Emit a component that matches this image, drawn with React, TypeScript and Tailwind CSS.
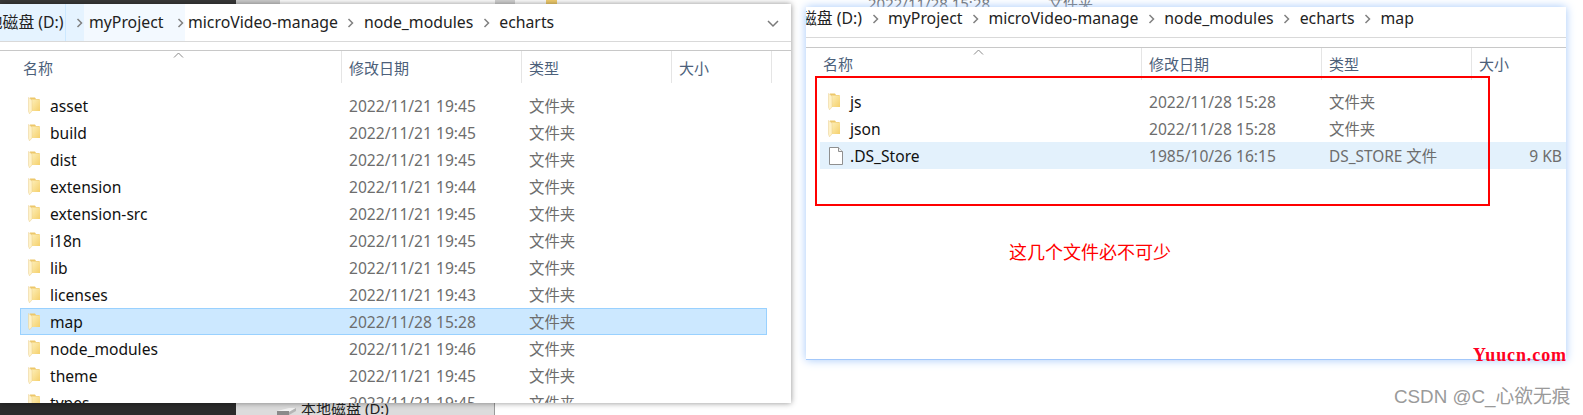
import React from "react";

const font = { fontFamily: '"Noto Sans","Noto Sans CJK SC",sans-serif' };

function Folder() {
  return (
    <svg width="12" height="17" viewBox="0 0 12 17" className="shrink-0">
      <defs>
        <linearGradient id="fb" x1="0" y1="0" x2="1" y2="1">
          <stop offset="0" stopColor="#fdeeb6" />
          <stop offset="1" stopColor="#f5d06c" />
        </linearGradient>
      </defs>
      <path d="M2 0.5h5l1 1.5h3.5v3H2z" fill="#edc76a" />
      <path d="M4 2.5h8v11.5H4z" fill="url(#fb)" />
      <path d="M0.5 0.5l3.5 2.5v11L1.5 16.8 0.5 14.5z" fill="#fff2c8" stroke="#e9cf8e" strokeWidth="0.5" />
    </svg>
  );
}

function FileIcon() {
  return (
    <svg width="16" height="18" viewBox="0 0 16 18" className="shrink-0">
      <path d="M1.5.5h9l4 4v13h-13z" fill="#fff" stroke="#8f8f8f" />
      <path d="M10.5.5v4h4" fill="#f0f0f0" stroke="#8f8f8f" />
    </svg>
  );
}

function Chev() {
  return (
    <span className="w-[26px] shrink-0 flex justify-center">
      <svg width="7" height="10" viewBox="0 0 7 10">
        <path d="M1.5 1l4 4-4 4" fill="none" stroke="#808080" strokeWidth="1.5" />
      </svg>
    </span>
  );
}

type Row = { name: string; date: string; type: string; size?: string; icon?: "file"; cls?: string };

function FileRow({ r, wide }: { r: Row; wide?: boolean }) {
  return (
    <div className={`h-[27px] flex items-center text-[15.6px] border border-transparent ${r.cls ?? ""}`}>
      <span className="w-[29px] shrink-0 flex pl-[7px]">{r.icon === "file" ? <FileIcon /> : <Folder />}</span>
      <span className="w-[299px] shrink-0 pt-[2px] text-[#111] whitespace-nowrap">{r.name}</span>
      <span className="w-[180px] shrink-0 pt-[2px] text-[#6d6d6d] whitespace-nowrap">{r.date}</span>
      <span className="w-[150px] shrink-0 pt-[2px] text-[15.4px] text-[#6d6d6d] whitespace-nowrap">{r.type}</span>
      {wide && <span className="flex-1 pt-[2px] text-right pr-[3px] text-[#6d6d6d] whitespace-nowrap">{r.size}</span>}
    </div>
  );
}

function Header({ offset, caret, lift }: { offset: string; caret: string; lift?: boolean }) {
  const col = `h-[32px] flex items-center pl-[7px] border-r border-[#e5e5e5] text-[15px] text-[#4c607a] shrink-0 ${lift ? "" : "pt-[2px]"}`;
  return (
    <div className="relative flex border-t border-[#c8c8c8]">
      <div className={`${col} ${offset}`}>名称</div>
      <div className={`${col} w-[180px]`}>修改日期</div>
      <div className={`${col} w-[150px]`}>类型</div>
      <div className={`${col} w-[100px]`}>大小</div>
      <svg className={`absolute top-[1px] ${caret}`} width="11" height="6" viewBox="0 0 11 6">
        <path d="M1 5.5l4.5-4.5 4.5 4.5" fill="none" stroke="#8a8a8a" />
      </svg>
    </div>
  );
}

const leftRows: Row[] = [
  ["asset", "2022/11/21 19:45"],
  ["build", "2022/11/21 19:45"],
  ["dist", "2022/11/21 19:45"],
  ["extension", "2022/11/21 19:44"],
  ["extension-src", "2022/11/21 19:45"],
  ["i18n", "2022/11/21 19:45"],
  ["lib", "2022/11/21 19:45"],
  ["licenses", "2022/11/21 19:43"],
  ["map", "2022/11/28 15:28"],
  ["node_modules", "2022/11/21 19:46"],
  ["theme", "2022/11/21 19:45"],
  ["types", "2022/11/21 19:45"],
].map(([name, date]) => ({
  name,
  date,
  type: "文件夹",
  cls: name === "map" ? "bg-[#cce8ff] !border-[#99d1ff]" : "",
}));

const rightRows: Row[] = [
  { name: "js", date: "2022/11/28 15:28", type: "文件夹" },
  { name: "json", date: "2022/11/28 15:28", type: "文件夹" },
  { name: ".DS_Store", date: "1985/10/26 16:15", type: "DS_STORE 文件", size: "9 KB", icon: "file", cls: "bg-[#e3f1fc]" },
];

export default function App() {
  return (
    <div className="relative w-[1583px] h-[415px] overflow-hidden bg-white" style={font}>
      {/* desktop behind the windows */}
      <div className="absolute left-0 top-0 w-[236px] h-[4px] bg-[#3a3a3a]" />
      <div className="absolute left-[236px] top-0 w-[44px] h-[4px] bg-[#cfcfcf]" />
      <div className="absolute left-[495px] top-0 w-[20px] h-[4px] bg-[#d4d4d4]" />
      <div className="absolute left-[546px] top-0 w-[11px] h-[4px] bg-[#f4cf6e]" />
      <div className="absolute left-[0px] top-[403px] w-[236px] h-[12px] bg-[#2b2b2b]" />
      <div className="absolute left-[236px] top-[403px] w-[258px] h-[12px] bg-[#dcdcdc]" />
      <div className="absolute left-[494px] top-[403px] w-[1px] h-[12px] bg-[#9a9a9a]" />
      <svg className="absolute left-[277px] top-[408px]" width="19" height="7" viewBox="0 0 19 7">
        <path d="M0 3l12-3h7l-7 4H0z" fill="#f2f2f2" />
        <path d="M0 3h12v4H0z" fill="#8a8a8a" />
        <path d="M12 4l7-4v3l-7 4z" fill="#b5b5b5" />
      </svg>
      <div className="absolute left-[301px] top-[398px] text-[15px] leading-[20px] text-[#222] whitespace-nowrap">本地磁盘 (D:)</div>
      <div className="absolute left-[868px] top-[-7px] text-[15px] leading-[20px] text-[#6d6d6d] whitespace-nowrap">2022/11/28 15:28</div>
      <div className="absolute left-[1048px] top-[-7px] text-[15px] leading-[20px] text-[#6d6d6d] whitespace-nowrap">文件夹</div>

      {/* left window */}
      <div className="absolute left-0 top-[4px] w-[791px] h-[399px] bg-white overflow-hidden shadow-[0_0_6px_rgba(0,0,0,0.45)]">
        <div className="relative h-[38px] flex items-center border-b border-[#d9d9d9] text-[15.8px] text-[#222] whitespace-nowrap">
          <span className="h-full flex items-center w-[66px] bg-[#e5f3ff] border-r border-[#cce8ff] shrink-0 overflow-hidden">
            <span className="ml-[-29px]">本地磁盘 (D:)</span>
          </span>
          <span className="h-full flex items-center w-[18px] bg-[#e5f3ff] overflow-hidden"><Chev /></span>
          <span className="h-full flex items-center pl-[5px] w-[83px] bg-[#f3f9ff] shrink-0">myProject</span>
          <span className="h-full flex items-center w-[18px] bg-[#f3f9ff] overflow-hidden"><Chev /></span>
          <span className="pl-[3px]">microVideo-manage</span>
          <Chev />
          <span>node_modules</span>
          <Chev />
          <span>echarts</span>
          <svg className="absolute left-[767px] top-[16px]" width="12" height="8" viewBox="0 0 12 8">
            <path d="M1 1l5 5 5-5" fill="none" stroke="#7a7a7a" strokeWidth="1.5" />
          </svg>
        </div>
        <div className="h-[8px]" />
        <Header offset="w-[342px] !pl-[23px]" caret="left-[173px]" />
        <div className="ml-[20px] mt-[9px] w-[747px]">
          {leftRows.map((r) => (
            <FileRow key={r.name} r={r} />
          ))}
        </div>
      </div>

      {/* right window */}
      <div className="absolute left-[806px] top-[7px] w-[760px] h-[353px] shadow-[0_0_9px_#a3c8fa] border-b border-[#a3c8fa]">
        <div className="w-full h-full bg-white overflow-hidden">
          <div className="h-[31px] flex items-center pb-[6px] border-b border-[#d9d9d9] text-[15.8px] text-[#222] whitespace-nowrap">
            <span className="w-[56px] shrink-0 overflow-hidden flex justify-end">
              <span className="shrink-0">本地磁盘 (D:)</span>
            </span>
            <Chev />
            <span>myProject</span>
            <Chev />
            <span>microVideo-manage</span>
            <Chev />
            <span>node_modules</span>
            <Chev />
            <span>echarts</span>
            <Chev />
            <span>map</span>
          </div>
          <div className="h-[9px]" />
          <Header offset="w-[336px] !pl-[17px]" caret="left-[167px]" lift />
          <div className="ml-[14px] mt-[8px]">
            {rightRows.map((r) => (
              <FileRow key={r.name} r={r} wide />
            ))}
          </div>
        </div>
      </div>

      {/* annotations */}
      <div className="absolute left-[815px] top-[76px] w-[675px] h-[130px] border-2 border-[#ff0000]" />
      <div className="absolute left-[1009px] top-[240px] text-[18px] leading-[24px] text-[#ff0000] whitespace-nowrap">这几个文件必不可少</div>
      <div className="absolute left-[1473px] top-[345px] text-[18px] leading-[20px] font-bold tracking-[0.9px] text-[#ff0022] whitespace-nowrap" style={{ fontFamily: '"Liberation Serif",serif' }}>Yuucn.com</div>
      <div className="absolute left-[1394px] top-[385px] text-[18.8px] leading-[24px] text-[#9a9a9a] whitespace-nowrap" style={{ fontFamily: '"Liberation Sans","Noto Sans CJK SC",sans-serif' }}>CSDN @C_心欲无痕</div>
    </div>
  );
}
